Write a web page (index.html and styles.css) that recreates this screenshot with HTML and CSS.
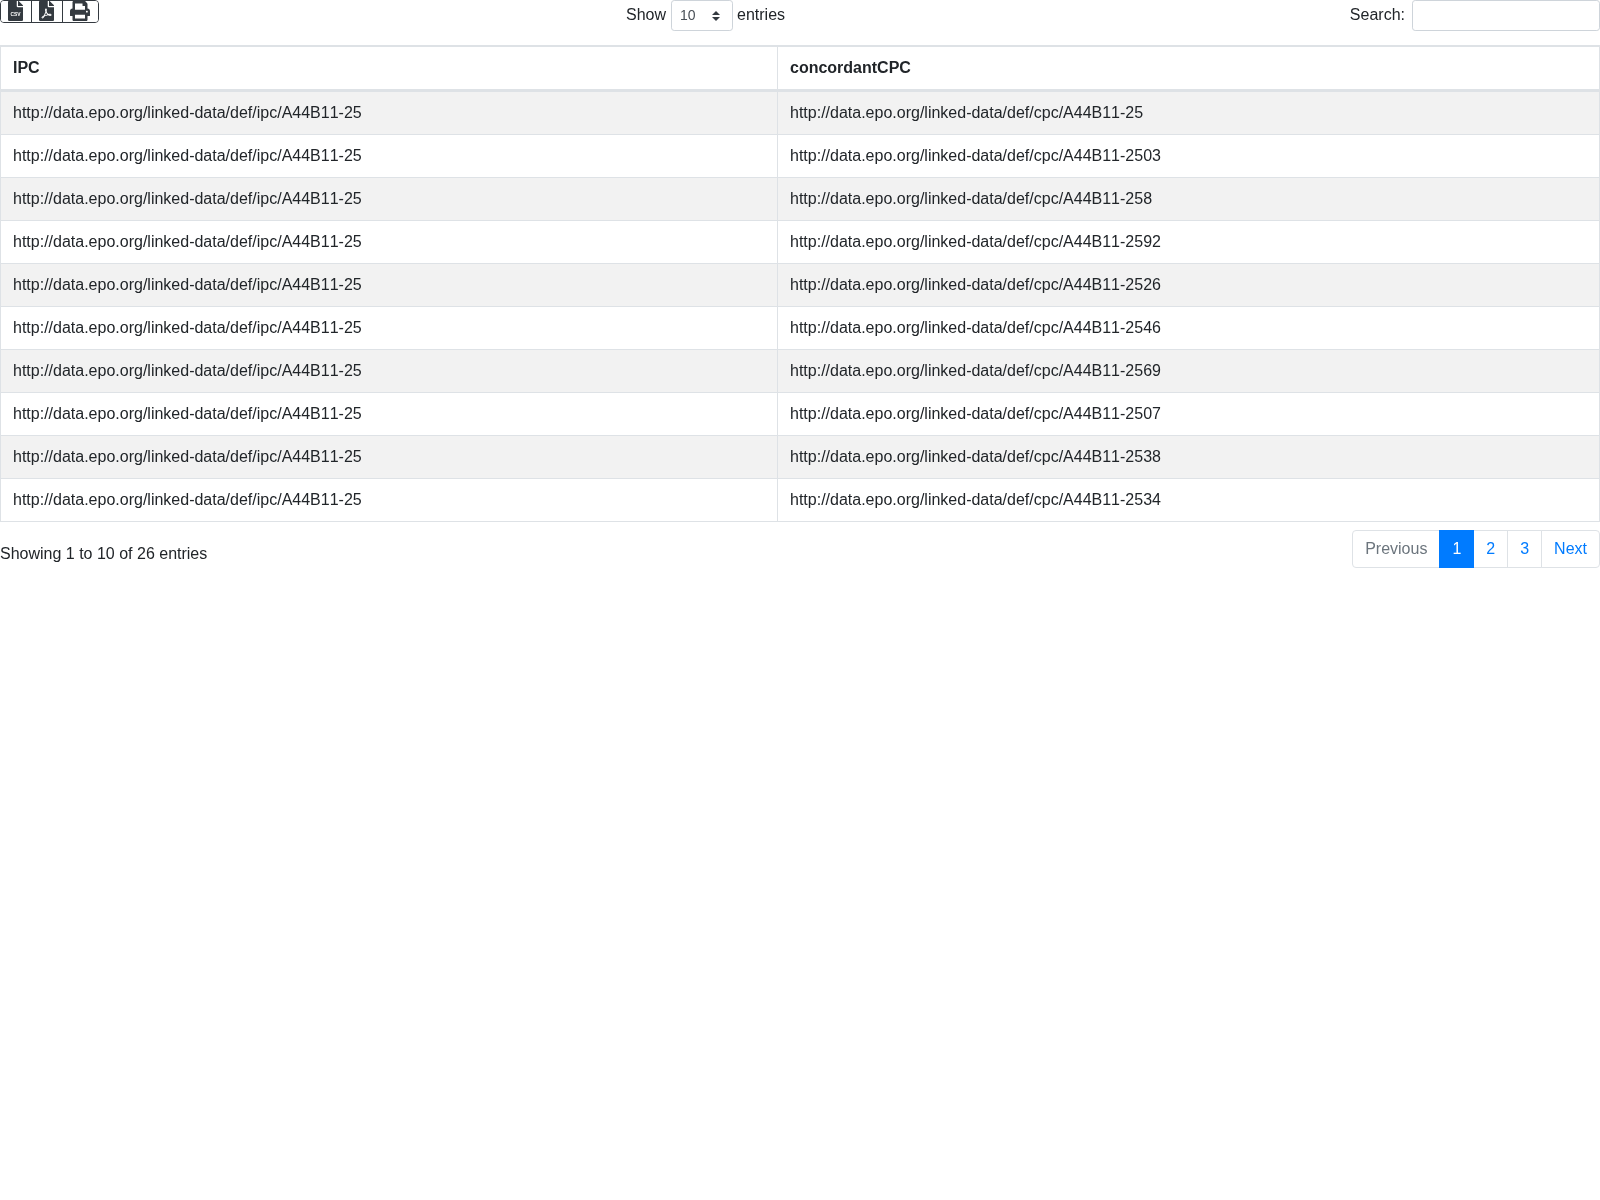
FILE: index.html
```html
<!DOCTYPE html>
<html lang="en">
<head>
<meta charset="utf-8">
<title>IPC concordance</title>
<link rel="stylesheet" href="styles.css">
</head>
<body>
<div class="toolbar">
  <div class="toolbar-left">
    <div class="btn-group">
      <button class="icon-btn btn-csv" aria-label="CSV">
        <svg width="15" height="20" viewBox="0 0 384 512"><path fill="#343a40" d="M224 136V0H24C10.700 0 0 10.700 0 24v464c0 13.300 10.700 24 24 24h336c13.300 0 24-10.700 24-24V160H248c-13.200 0-24-10.800-24-24zM384 121.900V128H256V0h6.100c6.400 0 12.500 2.500 17 7l97.900 98c4.500 4.500 7 10.600 7 16.900z"/><text class="csv-mark" x="192" y="375" text-anchor="middle">CSV</text></svg>
      </button>
      <button class="icon-btn btn-pdf" aria-label="PDF">
        <svg width="15" height="20" viewBox="0 0 384 512"><path fill="#343a40" d="M181.900 256.100c-5-16-4.900-46.900-2-46.900 8.400 0 7.600 36.900 2 46.900zm-1.700 47.200c-7.700 20.200-17.300 43.300-28.400 62.700 18.300-7 39-17.200 62.900-21.900-12.700-9.600-24.900-23.400-34.500-40.800zM86.100 428.100c0 .8 13.200-5.400 34.900-40.200-6.700 6.300-29.100 24.500-34.900 40.200zM248 160h136v328c0 13.300-10.700 24-24 24H24c-13.300 0-24-10.700-24-24V24C0 10.700 10.700 0 24 0h200v136c0 13.200 10.800 24 24 24zm-8 171.800c-20-12.200-33.300-29-42.700-53.800 4.500-18.500 11.600-46.600 6.200-64.200-4.700-29.400-42.400-26.500-47.800-6.800-5 18.300-.4 44.100 8.100 77-11.600 27.600-28.700 64.600-40.800 85.800-.1 0-.1.100-.2.100-27.100 13.900-73.600 44.500-54.500 68 5.600 6.900 16 10 21.500 10 17.900 0 35.700-18 61.100-61.800 25.800-8.500 54.100-19.100 79-23.200 21.700 11.800 47.100 19.500 64 19.500 29.200 0 31.200-32 19.700-43.400-13.900-13.600-54.300-9.700-73.600-7.200zM377 105L279 7c-4.500-4.500-10.600-7-17-7h-6v128h128v-6.100c0-6.300-2.500-12.400-7-16.900zm-74.100 255.300c4.100-2.700-2.500-11.900-42.800-9 37.100 15.800 42.800 9 42.800 9z"/></svg>
      </button>
      <button class="icon-btn btn-print" aria-label="Print">
        <svg width="20" height="20" viewBox="0 0 512 512"><path fill="#343a40" d="M448 192V77.250c0-8.490-3.370-16.620-9.370-22.630L393.370 9.370c-6-6-14.140-9.370-22.630-9.370H96C78.330 0 64 14.330 64 32v160c-35.350 0-64 28.650-64 64v112c0 8.840 7.160 16 16 16h48v96c0 17.670 14.330 32 32 32h320c17.670 0 32-14.330 32-32v-96h48c8.840 0 16-7.160 16-16V256c0-35.350-28.650-64-64-64zm-64 256H128v-96h256v96zm0-224H128V64h192v48c0 8.840 7.160 16 16 16h48v96zm48 72c-13.250 0-24-10.750-24-24 0-13.260 10.750-24 24-24s24 10.740 24 24c0 13.250-10.750 24-24 24z"/></svg>
      </button>
    </div>
  </div>
  <div class="toolbar-center">
    <label class="field">
      <span class="field-text">Show</span>
      <span class="select-box"><span class="select-value">10</span>
        <svg class="select-arrows" width="8" height="10" viewBox="0 0 8 10"><path fill="#343a40" d="M4 0 8 4H0zM0 6h8L4 10z"/></svg>
      </span>
      <span class="field-text field-text-tight">entries</span>
    </label>
  </div>
  <div class="toolbar-right">
    <label class="field field-search">
      <span class="field-text">Search:</span>
      <input class="search-input" type="search" aria-label="Search">
    </label>
  </div>
</div>

<table class="data-table">
  <colgroup><col class="col-ipc"><col class="col-cpc"></colgroup>
  <thead>
    <tr><th>IPC</th><th>concordantCPC</th></tr>
  </thead>
  <tbody>
    <tr><td>http://data.epo.org/linked-data/def/ipc/A44B11-25</td><td>http://data.epo.org/linked-data/def/cpc/A44B11-25</td></tr>
    <tr><td>http://data.epo.org/linked-data/def/ipc/A44B11-25</td><td>http://data.epo.org/linked-data/def/cpc/A44B11-2503</td></tr>
    <tr><td>http://data.epo.org/linked-data/def/ipc/A44B11-25</td><td>http://data.epo.org/linked-data/def/cpc/A44B11-258</td></tr>
    <tr><td>http://data.epo.org/linked-data/def/ipc/A44B11-25</td><td>http://data.epo.org/linked-data/def/cpc/A44B11-2592</td></tr>
    <tr><td>http://data.epo.org/linked-data/def/ipc/A44B11-25</td><td>http://data.epo.org/linked-data/def/cpc/A44B11-2526</td></tr>
    <tr><td>http://data.epo.org/linked-data/def/ipc/A44B11-25</td><td>http://data.epo.org/linked-data/def/cpc/A44B11-2546</td></tr>
    <tr><td>http://data.epo.org/linked-data/def/ipc/A44B11-25</td><td>http://data.epo.org/linked-data/def/cpc/A44B11-2569</td></tr>
    <tr><td>http://data.epo.org/linked-data/def/ipc/A44B11-25</td><td>http://data.epo.org/linked-data/def/cpc/A44B11-2507</td></tr>
    <tr><td>http://data.epo.org/linked-data/def/ipc/A44B11-25</td><td>http://data.epo.org/linked-data/def/cpc/A44B11-2538</td></tr>
    <tr><td>http://data.epo.org/linked-data/def/ipc/A44B11-25</td><td>http://data.epo.org/linked-data/def/cpc/A44B11-2534</td></tr>
  </tbody>
</table>

<div class="footer">
  <div class="info">Showing 1 to 10 of 26 entries</div>
  <ul class="pagination">
    <li class="page disabled">Previous</li>
    <li class="page active">1</li>
    <li class="page">2</li>
    <li class="page">3</li>
    <li class="page">Next</li>
  </ul>
</div>
</body>
</html>
```
FILE: styles.css
```css
* { box-sizing: border-box; }
html, body { margin: 0; padding: 0; background: #fff; }
body {
  font-family: "Liberation Sans", Arial, sans-serif;
  font-size: 16px;
  line-height: 24px;
  color: #212529;
  font-kerning: none;
  will-change: transform;
}
.toolbar {
  display: grid;
  grid-template-columns: 411px 589px 1fr;
  height: 45px;
  align-items: start;
}
.btn-group {
  display: inline-flex;
  height: 23px;
  border: 1px solid #343a40;
  border-radius: 4px;
  overflow: hidden;
}
.icon-btn {
  display: flex;
  align-items: center;
  justify-content: center;
  padding: 0 1px 0 0;
  margin: 0;
  height: 21px;
  background: #fff;
  border: 0;
  border-right: 1px solid #343a40;
}
.icon-btn svg { display: block; margin-top: -2px; }
.csv-mark { font: 700 125px "Liberation Sans", Arial, sans-serif; fill: #fff; }
.btn-csv { width: 31px; }
.btn-pdf { width: 31px; }
.btn-print { width: 35px; border-right: 0; }
.toolbar-center { display: flex; justify-content: center; }
.toolbar-right { display: flex; justify-content: flex-end; }
.field { display: inline-flex; align-items: flex-start; gap: 5px; height: 31px; }
.field-search { gap: 7px; }
.field-text { margin-top: 3px; }
.field-text-tight { margin-left: -1px; }
.select-box {
  display: inline-flex;
  align-items: center;
  justify-content: space-between;
  width: 62px;
  height: 31px;
  padding: 0 12px 0 8px;
  border: 1px solid #ced4da;
  border-radius: 3.2px;
  font-size: 14px;
  color: #495057;
  background: #fff;
}
.select-value { margin-top: -1px; }
.search-input {
  width: 188px;
  height: 31px;
  padding: 0 8px;
  border: 1px solid #ced4da;
  border-radius: 3.2px;
  background: #fff;
  outline: 0;
}
.data-table {
  width: 1600px;
  table-layout: fixed;
  border-collapse: separate;
  border-spacing: 0;
  border: 1px solid #dee2e6;
  border-right: 0;
}
.col-ipc { width: 777px; }
.col-cpc { width: 822px; }
.data-table th, .data-table td {
  padding: 12px;
  border-top: 1px solid #dee2e6;
  border-right: 1px solid #dee2e6;
  text-align: left;
  vertical-align: middle;
  line-height: 18px;
}
.data-table th { font-weight: 700; border-bottom: 2px solid #dee2e6; }
.data-table tbody tr:nth-child(odd) { background: #f2f2f2; }
.footer {
  display: flex;
  justify-content: space-between;
  align-items: flex-start;
  margin-top: 8px;
}
.info { padding-top: 12px; }
.pagination {
  display: flex;
  list-style: none;
  margin: 0;
  padding: 0;
}
.page {
  height: 38px;
  padding: 6px 12px;
  margin-left: -1px;
  border: 1px solid #dee2e6;
  color: #007bff;
  background: #fff;
}
.page:first-child { margin-left: 0; border-radius: 4px 0 0 4px; }
.page:last-child { border-radius: 0 4px 4px 0; }
.page.disabled { color: #6c757d; }
.page.active { color: #fff; background: #007bff; border-color: #007bff; position: relative; }
```
